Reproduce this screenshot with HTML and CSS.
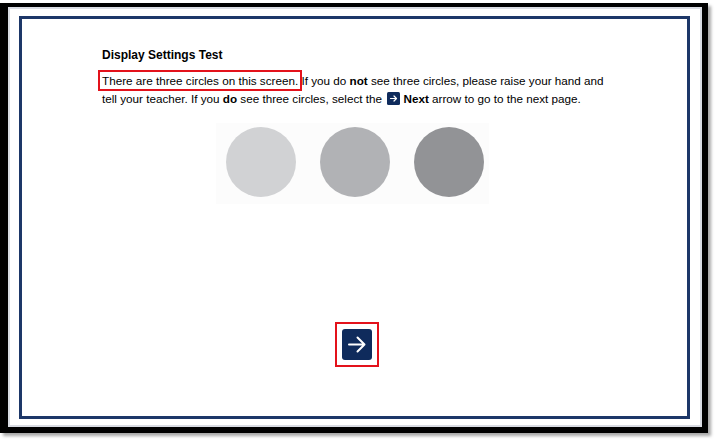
FILE: index.html
```html
<!DOCTYPE html>
<html>
<head>
<meta charset="utf-8">
<link rel="stylesheet" href="styles.css">
</head>
<body>
<div class="frame">
  <div class="frame-inner">
    <div class="screen">
      <h1 class="title">Display Settings Test</h1>
      <p class="instructions"><span class="marked">There are three circles on this screen.</span> If you do <b>not</b> see three circles, please raise your hand and<br>tell your teacher. If you <b>do</b> see three circles, select the <span class="mini-arrow"><svg viewBox="0 0 13 13" width="13" height="13"><rect width="13" height="13" rx="1.5" fill="#0f2b5c"/><path d="M3.5 6.5h6M7 4l2.5 2.5L7 9" stroke="#fff" stroke-width="1.2" fill="none" stroke-linecap="round" stroke-linejoin="round"/></svg></span> <b>Next</b> arrow to go to the next page.</p>
      <div class="circles-row">
        <div class="circles">
          <div class="circle c1"></div>
          <div class="circle c2"></div>
          <div class="circle c3"></div>
        </div>
      </div>
      <div class="nav">
        <div class="next-marked">
          <button class="next-btn" aria-label="Next">
            <svg viewBox="0 0 30 31" width="30" height="31"><path d="M7 15.5h15.5M15.5 8.5l7 7-7 7" stroke="#fff" stroke-width="2" fill="none" stroke-linecap="round" stroke-linejoin="round"/></svg>
          </button>
        </div>
      </div>
    </div>
  </div>
</div>
</body>
</html>
```
FILE: styles.css
```css
html, body {
  margin: 0;
  padding: 0;
  background: #ffffff;
}
body {
  font-family: "Liberation Sans", Arial, sans-serif;
  color: #000;
  width: 716px;
  height: 442px;
  overflow: hidden;
}
.frame {
  box-sizing: border-box;
  width: 708px;
  height: 430px;
  margin-top: 3px;
  border-style: solid;
  border-color: #000;
  border-width: 4px 6px 6px 8px;
  box-shadow: 3px 3px 3px rgba(0, 0, 0, 0.35);
  background: #fff;
}
.frame-inner {
  box-sizing: border-box;
  height: 100%;
  border: 2px solid #d9dce3;
  padding: 7px 10px 6px 9px;
}
.screen {
  box-sizing: border-box;
  height: 403px;
  border: 3px solid #1d3768;
  padding: 28px 40px 0 80px;
  display: flex;
  flex-direction: column;
}
.title {
  margin: 0;
  font-size: 12px;
  line-height: 16px;
  font-weight: bold;
}
.instructions {
  margin: 9px 0 0 0;
  font-size: 11.7px;
  line-height: 18px;
  white-space: nowrap;
}
.marked {
  outline: 2px solid #e3121b;
  outline-offset: 2px;
}
.mini-arrow {
  display: inline-block;
  width: 13px;
  height: 13px;
  vertical-align: -2px;
  margin-left: 2px;
}
.mini-arrow svg {
  display: block;
}
.circles-row {
  display: flex;
  justify-content: center;
  margin: 15px 0 0 -80px;
  padding-left: 36px;
}
.circles {
  display: flex;
  gap: 24px;
  padding: 4px 5px 7px 10px;
  background: #fcfcfc;
}
.circle {
  width: 70px;
  height: 70px;
  border-radius: 50%;
}
.c1 { background: #d1d2d4; }
.c2 { background: #b1b2b5; }
.c3 { background: #929396; }
.nav {
  display: flex;
  justify-content: center;
  margin: 118px 0 0 -80px;
  padding-left: 44px;
}
.next-marked {
  border: 2px solid #e3121b;
  padding: 5px;
  display: flex;
}
.next-btn {
  width: 30px;
  height: 31px;
  border: none;
  padding: 0;
  border-radius: 3px;
  background: #0f2b5c;
  display: block;
}
.next-btn svg {
  display: block;
}
```
